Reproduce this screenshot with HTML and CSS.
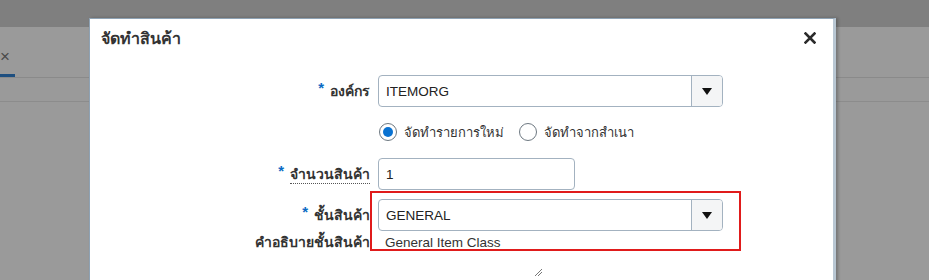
FILE: index.html
```html
<!DOCTYPE html>
<html lang="th">
<head>
    <meta charset="UTF-8">
    <title>จัดทำสินค้า</title>
    <link rel="stylesheet" href="styles.css">
</head>
<body>
    <div class="page">
        <div class="page-top"></div>
        <div class="tabbar">
            <div class="tab">
                <span class="tab-close">×</span>
            </div>
        </div>
        <div class="subbar"></div>
    </div>

    <div class="dialog">
        <div class="dialog-header">
            <h1 class="dialog-title">จัดทำสินค้า</h1>
            <svg class="dialog-close" width="12" height="12" viewBox="0 0 12 12">
                <path d="M1.5 1.5 L10.5 10.5 M10.5 1.5 L1.5 10.5" stroke="#2b2b2b" stroke-width="2.6" stroke-linecap="square"/>
            </svg>
        </div>

        <div class="form">
            <div class="row row-org">
                <label class="label"><span class="req">*</span>องค์กร</label>
                <div class="select wide">
                    <span class="select-value">ITEMORG</span>
                    <span class="select-btn"><span class="tri"></span></span>
                </div>
            </div>

            <div class="row row-radio">
                <span></span>
                <div class="radios">
                    <span class="radio checked"></span>
                    <span class="radio-text">จัดทำรายการใหม่</span>
                    <span class="radio"></span>
                    <span class="radio-text">จัดทำจากสำเนา</span>
                </div>
            </div>

            <div class="row row-qty">
                <label class="label"><span class="req">*</span><span class="dotted">จำนวนสินค้า</span></label>
                <div class="input narrow">1</div>
            </div>

            <div class="row row-class">
                <label class="label"><span class="req">*</span>ชั้นสินค้า</label>
                <div class="select wide">
                    <span class="select-value">GENERAL</span>
                    <span class="select-btn"><span class="tri"></span></span>
                </div>
            </div>

            <div class="row row-desc">
                <label class="label">คำอธิบายชั้นสินค้า</label>
                <div class="desc">General Item Class</div>
            </div>

            <div class="highlight"></div>
        </div>

        <svg class="resize" width="9" height="9" viewBox="0 0 9 9">
            <path d="M1 8 L8 1 M4 8 L8 4" stroke="#777" stroke-width="1"/>
        </svg>
    </div>
</body>
</html>
```

FILE: styles.css
```css
body {
    margin: 0;
    width: 929px;
    height: 280px;
    overflow: hidden;
    position: relative;
    background-color: #9a9a9a;
    font-family: "Liberation Sans", Arial, "Noto Sans", sans-serif;
}

.page-top {
    height: 27px;
    background-color: #7f7f7f;
}

.tabbar {
    height: 50px;
    border-bottom: 1px solid #8a8a8a;
}

.tab {
    width: 15px;
    height: 47px;
    border-bottom: 3px solid #1e4f80;
    position: relative;
}

.tab-close {
    position: absolute;
    left: 0;
    top: 20px;
    font-size: 17px;
    line-height: 20px;
    color: #4a4a4a;
}

.subbar {
    height: 23px;
    border-bottom: 1px solid #8c8c8c;
}

.dialog {
    position: absolute;
    left: 89px;
    top: 18px;
    width: 743px;
    height: 300px;
    background-color: #fff;
    border: 1px solid #8ea2b4;
    border-right: 3px solid #b9c7d3;
    box-shadow: 2px 0 3px rgba(0, 0, 0, 0.25);
}

.dialog-header {
    display: flex;
    justify-content: space-between;
    align-items: flex-start;
    padding: 9px 17px 0 11px;
    height: 48px;
    box-sizing: border-box;
}

.dialog-title {
    margin: 0;
    font-size: 16px;
    font-weight: bold;
    color: #333;
    line-height: 22px;
}

.dialog-close {
    margin-top: 4px;
}

.form {
    position: relative;
    margin-top: 8px;
}

.row {
    display: grid;
    grid-template-columns: 280px 1fr;
    column-gap: 8px;
    align-items: center;
}

.row-org {
    height: 32px;
}

.row-radio {
    height: 32px;
    margin-top: 9px;
}

.row-qty {
    height: 32px;
    margin-top: 10px;
}

.row-class {
    height: 32px;
    margin-top: 9px;
}

.row-desc {
    height: 17px;
}

.label {
    text-align: right;
    font-size: 14px;
    font-weight: bold;
    color: #333;
    white-space: nowrap;
}

.req {
    color: #0a6bc4;
    font-size: 15px;
    margin-right: 6px;
    position: relative;
    top: -3px;
}

.dotted {
    border-bottom: 1px dotted #555;
    padding-bottom: 1px;
}

.select,
.input {
    height: 32px;
    box-sizing: border-box;
    border: 1px solid #a3b2c0;
    border-radius: 4px;
    background-color: #fff;
    font-size: 13.5px;
    color: #222;
}

.select {
    display: flex;
    align-items: stretch;
}

.wide {
    width: 345px;
}

.narrow {
    width: 197px;
}

.select-value {
    flex: 1;
    display: flex;
    align-items: center;
    padding-left: 7px;
}

.input {
    display: flex;
    align-items: center;
    padding-left: 7px;
}

.select-btn {
    width: 30px;
    border-left: 1px solid #a3b2c0;
    background-color: #f4f5f6;
    border-radius: 0 3px 3px 0;
    display: flex;
    align-items: center;
    justify-content: center;
}

.tri {
    width: 0;
    height: 0;
    border-left: 5px solid transparent;
    border-right: 5px solid transparent;
    border-top: 7px solid #111;
}

.radios {
    display: flex;
    align-items: center;
    font-size: 13px;
    color: #333;
}

.radio {
    width: 18px;
    height: 18px;
    box-sizing: border-box;
    border: 1px solid #6d7881;
    border-radius: 50%;
    margin-left: 1px;
    display: flex;
    align-items: center;
    justify-content: center;
}

.radio.checked::after {
    content: "";
    width: 10px;
    height: 10px;
    border-radius: 50%;
    background-color: #0a72d1;
}

.radio-text {
    margin-left: 7px;
    margin-right: 14px;
}

.desc {
    font-size: 13.5px;
    color: #333;
    padding-left: 7px;
}

/* rettangolo rosso di evidenziazione */
.highlight {
    position: absolute;
    left: 280px;
    top: 116px;
    width: 371px;
    height: 60px;
    box-sizing: border-box;
    border: 2px solid #e01b1b;
}

.resize {
    position: absolute;
    left: 444px;
    top: 249px;
}
```
